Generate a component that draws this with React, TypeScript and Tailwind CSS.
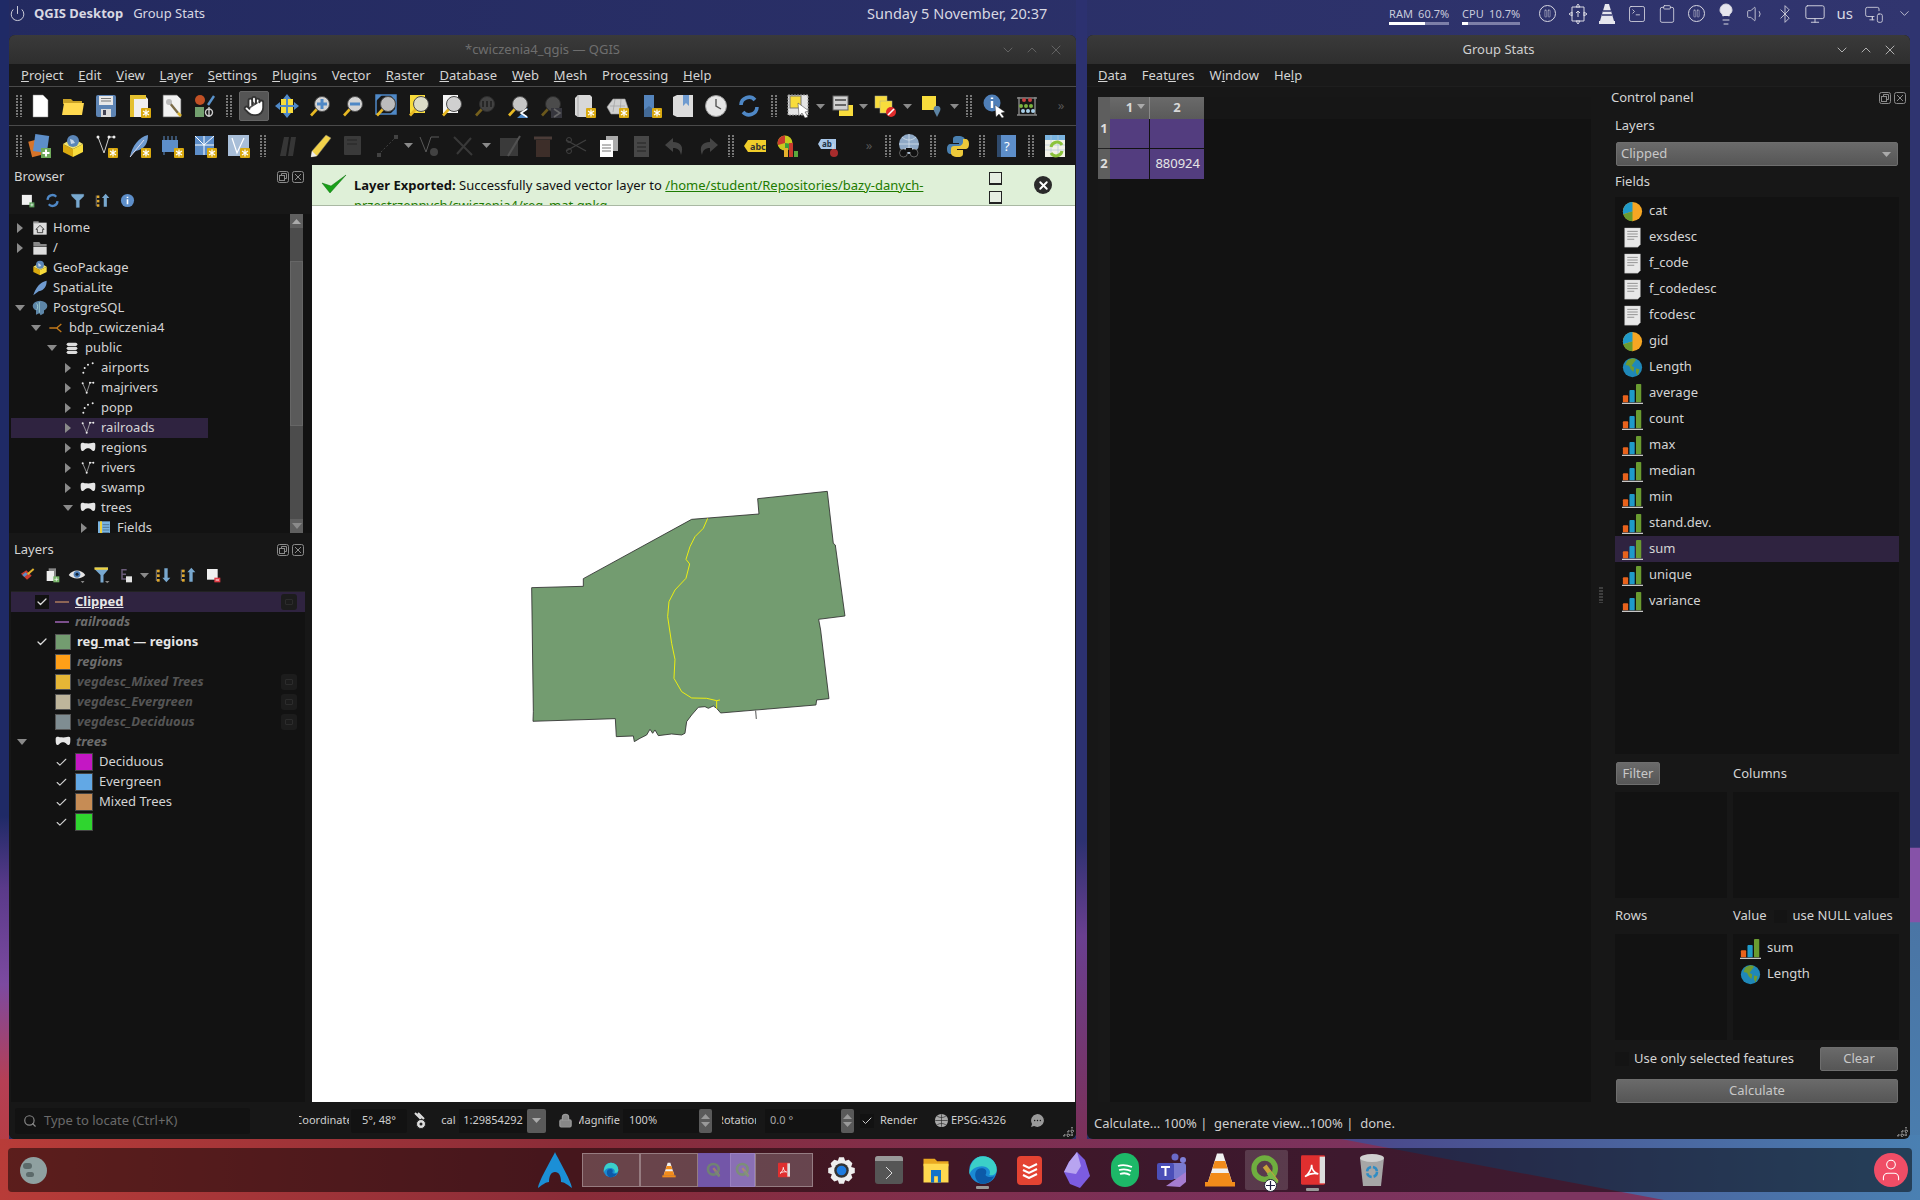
import { ReactNode } from 'react';
import { Power, Pause, Clipboard, Volume1, Bluetooth, Monitor, Lightbulb, ChevronDown, ChevronUp, X, Search, Lock, Check, SquareTerminal, Hand, MessageCircleMore, User, MonitorSmartphone } from 'lucide-react';

const Svg = ({ children, s = 24, vb = 24, cls = '' }: { children: ReactNode; s?: number; vb?: number; cls?: string }) => (
  <svg width={s} height={s} viewBox={`0 0 ${vb} ${vb}`} className={cls}>{children}</svg>
);

const Star = () => (
  <g>
    <rect x="14" y="14" width="10" height="10" rx="1" fill="#d9a90f" />
    <path d="M19 15.5v7M16 17l6 4M22 17l-6 4" stroke="#fff" strokeWidth="1.2" />
  </g>
);

const Mag = ({ c = '#c8c8c8', children }: { c?: string; children?: ReactNode }) => (
  <g>
    <path d="M9 15 3 21.5" stroke="#e8b923" strokeWidth="2.6" />
    <circle cx="14" cy="10" r="7.5" fill={c} stroke="#4c4c4c" />
    {children}
  </g>
);

const VecLine = () => (
  <g stroke="#cfcfcf" fill="none" strokeWidth="1">
    <path d="M4 5l6 14 5-15 5 0" />
    <g fill="#eee" stroke="none"><circle cx="4" cy="5" r="1.5" /><circle cx="10" cy="19" r="1.5" /><circle cx="15" cy="4" r="1.5" /><circle cx="20" cy="4" r="1.5" /></g>
  </g>
);
const VecPoint = () => (
  <g fill="#eee"><circle cx="5" cy="19" r="1.5" /><circle cx="7" cy="12" r="1.5" /><circle cx="12" cy="7" r="1.5" /><circle cx="19" cy="5" r="1.5" /></g>
);
const VecPoly = () => (
  <path d="M1 7c0-3 3-3 5-2.500s8 1 12 0 5-.5 5 3c0 5 0 9-3 9s-3-4-8-4-5 4-8 4-3-5-3-9.500z" fill="#e6e6e6" />
);

const icons: Record<string, ReactNode> = {
  new: <path d="M5 1h10l5 5v17H5z" fill="#fff" stroke="#888" strokeWidth=".5" />,
  open: <g><path d="M2 5h8l2 2h9v3H2z" fill="#c9a227" /><path d="M3 9h20l-2 12H1z" fill="#ffd94f" /></g>,
  save: <g><rect x="2" y="1" width="20" height="22" rx="2" fill="#5d84b4" /><rect x="5" y="2" width="14" height="9" fill="#e8e8e8" /><path d="M7 4.5h10M7 7h10" stroke="#777" /><rect x="7" y="15" width="10" height="8" fill="#dcdcdc" /><rect x="9" y="16" width="3" height="5" fill="#445" /></g>,
  layout: <g><path d="M3 1h14l4 4v18H3z" fill="#efefef" /><path d="M3 1h4v22H3z" fill="#e4c02f" /><path d="M3 1h16v4H3z" fill="#e4c02f" /><Star /></g>,
  report: <g><path d="M3 1h14l4 4v18H3z" fill="#f2f2f2" stroke="#555" strokeWidth=".7" /><path d="M9 8l9 11" stroke="#7a6a46" strokeWidth="2.4" /><circle cx="9" cy="8" r="3" fill="#bbb" /><path d="M18 19l3 3" stroke="#d8b22a" strokeWidth="2.6" /></g>,
  style: <g><circle cx="7" cy="6" r="5" fill="#c25125" /><path d="M15 11 21 2" stroke="#5a93cc" strokeWidth="2.4" /><rect x="2" y="13" width="9" height="10" fill="#73a06f" /><path d="M16 15a3 3 0 1 1 0 7 3 3 0 0 1 0-7zM16 13v10" stroke="#ccc" fill="none" strokeWidth="1.4" /></g>,
  panSel: <g><rect x="6" y="5" width="12" height="14" fill="#f8dc3c" /><path d="M12 0l4 5H8zM12 24l-4-5h8zM0 12l5-4v8zM24 12l-5 4V8z" fill="#4f88c6" /><path d="M12 5v14M5 12h14" stroke="#4f88c6" strokeWidth="2" /></g>,
  zoomIn: <Mag c="#d4d4d4"><path d="M14 5v10M9 10h10" stroke="#4f88c6" strokeWidth="3" /></Mag>,
  zoomOut: <Mag c="#d4d4d4"><path d="M9 10h10" stroke="#4f88c6" strokeWidth="3" /></Mag>,
  zoomFull: <g><path d="M2 1h6L2 7zM22 1h-6l6 6zM22 20h-6l6-6z" fill="#4f88c6" /><rect x="2" y="1" width="20" height="19" fill="none" stroke="#4f88c6" strokeWidth="1.5" /><Mag c="#bcbcbc" /></g>,
  zoomLayer: <g><rect x="3" y="1" width="15" height="18" fill="#f8dc3c" /><Mag c="#dcdcc8" /></g>,
  zoomSel: <g><path d="M3 1h15v18H3z" fill="#f4f4f4" /><Mag c="#d0d0d0" /></g>,
  zoom11: <g opacity=".45"><Mag c="#777"><path d="M10 7v6M14 7v6M18 7v6" stroke="#222" strokeWidth="1.4" /></Mag></g>,
  zoomLast: <g><Mag c="#c6c6c6" /><path d="M22 14v10H11zM22 15l-6 4 6 4" fill="#4f88c6" /><path d="M21 15l-6 4 6 4" fill="none" stroke="#fff" strokeWidth="1.6" /></g>,
  zoomNext: <g opacity=".4"><Mag c="#999" /><rect x="12" y="14" width="11" height="10" fill="#667" /><path d="M15 15l6 4-6 4" fill="none" stroke="#ddd" strokeWidth="1.6" /></g>,
  bookNew: <g><path d="M3 4 6 1h12l2 2v20H6l-3-2z" fill="#d8d8d8" /><path d="M6 1v22" stroke="#aaa" /><Star /></g>,
  mapNew: <g><path d="M2 13 8 5h12l3 9-7 6H6z" fill="#d0d0d0" stroke="#999" strokeWidth=".6" /><path d="M5 12h15M10 5 8 18M16 5l-1 14" stroke="#999" strokeWidth=".6" /><Star /></g>,
  bookmark: <g><path d="M6 1h10v15l-5-4-5 4z" fill="#6f9bd0" /><path d="M6 1h10v22H6z" fill="#4f7fb8" opacity=".8" /><Star /></g>,
  bookShow: <g><path d="M2 3 6 1h16v22H6l-4-2z" fill="#dcdcdc" /><path d="M12 1h6v11l-3-3-3 3z" fill="#6f9bd0" /></g>,
  clock: <g><circle cx="12" cy="12" r="10.5" fill="#e6e6e6" stroke="#999" /><path d="M12 5v7l5 3" fill="none" stroke="#555" strokeWidth="1.4" /></g>,
  refresh: <g fill="none" stroke="#4f88c6" strokeWidth="3.6"><path d="M4 11a8 8 0 0 1 14-5" /><path d="M20 13a8 8 0 0 1-14 5" /></g>,
  select: <g><rect x="1" y="1" width="20" height="20" fill="#e4e4e4" strokeDasharray="2 1" stroke="#999" /><rect x="3" y="2" width="11" height="12" fill="#f8dc3c" stroke="#777" /><path d="M11 9l1 13 3-3 3 5 3-1-3-5 4-1z" fill="#fff" stroke="#333" strokeWidth=".5" /></g>,
  selForm: <g><rect x="8" y="11" width="14" height="11" fill="#f8dc3c" /><rect x="2" y="2" width="15" height="14" fill="#d0d0d0" stroke="#666" /><path d="M4 6h11M4 11h11" stroke="#666" strokeWidth="2" /></g>,
  deselect: <g><rect x="2" y="2" width="12" height="12" fill="#f8dc3c" stroke="#aa9" strokeWidth=".5" /><rect x="7" y="7" width="12" height="12" fill="#f8dc3c" stroke="#aa9" strokeWidth=".5" /><circle cx="18" cy="18" r="5" fill="#e02b2b" /><path d="M15 21l6-6" stroke="#fff" strokeWidth="1.6" /></g>,
  selLoc: <g><rect x="3" y="2" width="14" height="14" fill="#f8dc3c" /><path d="M18 12c3 0 4 2 3 5l-3 6-3-6c-1-3 0-5 3-5z" fill="#5d84a4" /></g>,
  identify: <g><circle cx="10" cy="9" r="8.5" fill="#4f7fb8" /><path d="M10 7v7M10 3.5v1.5" stroke="#fff" strokeWidth="2.4" /><path d="M13 11l1 12 3-3 3 4 2-1-3-4 4-1z" fill="#fff" stroke="#333" strokeWidth=".4" /></g>,
  abacus: <g><path d="M2 4h20M2 21h20M4 3v18M20 3v18" stroke="#888" strokeWidth="1.4" /><g fill="#c84040"><circle cx="9" cy="6" r="2" /><circle cx="15" cy="6" r="2" /></g><g fill="#7cb23f"><circle cx="6" cy="12" r="2" /><circle cx="11" cy="12" r="2" /><circle cx="16" cy="12" r="2" /></g><g fill="#a9d0ea"><circle cx="8" cy="17" r="2" /><circle cx="13" cy="17" r="2" /><circle cx="18" cy="17" r="2" /></g></g>,
  dsm: <g><rect x="2" y="6" width="13" height="16" fill="#d6742a" transform="rotate(-14 8 14)" /><rect x="6" y="1" width="14" height="17" fill="#5d8ec9" transform="rotate(8 13 10)" /><rect x="13" y="14" width="10" height="10" fill="#6ea95a" /><path d="M18 15.5v7M14.5 19h7" stroke="#fff" strokeWidth="2" /></g>,
  gpkg: <g><path d="M2 10l10 5v8L2 18z" fill="#d9a90f" /><path d="M22 10l-10 5v8l10-5z" fill="#f8dc3c" /><path d="M2 10l10-6 10 6-10 5z" fill="#f4e46c" /><circle cx="12" cy="7" r="6" fill="#5b86b8" /><path d="M9 5l3 1 2 3-4 1z" fill="#c5d6e8" /></g>,
  newLine: <g><path d="M4 3l6 16 5-16h5" fill="none" stroke="#cfcfcf" /><g fill="#eee"><circle cx="4" cy="3" r="1.5" /><circle cx="15" cy="3" r="1.5" /><circle cx="20" cy="3" r="1.5" /></g><Star /></g>,
  feather: <g><path d="M3 23C5 12 12 3 21 1c0 8-3 14-12 16l-3 2z" fill="#6f9bd0" /><path d="M3 23 17 6" stroke="#dde" /><Star /></g>,
  feather2: <path d="M2 23C5 12 12 3 22 1c0 8-3 14-12 16l-3 2z" fill="#6f9bd0" />,
  wms: <g><rect x="2" y="6" width="16" height="12" fill="#5d8ec9" /><path d="M4 2v4M8 2v4M12 2v4M16 2v4M4 18v3" stroke="#5d8ec9" /><Star /></g>,
  grid: <g><rect x="2" y="2" width="19" height="19" fill="#5d8ec9" /><path d="M2 11h19M11 2v19M2 2l9 9M21 2l-10 9" stroke="#fff" strokeWidth="1" /><Star /></g>,
  vlayer: <g><rect x="2" y="1" width="21" height="21" fill="#a8bed8" /><path d="M6 4l5 15 7-15" fill="none" stroke="#fff" strokeWidth="1.2" /><Star /></g>,
  digit: <g opacity=".4"><path d="M4 22 8 3h5l-3 19zM12 22l3-19h5l-3 19z" fill="#666" /></g>,
  pencil: <g><path d="M17 1l5 3L8 22l-6 1 1-6z" fill="#f3d34a" stroke="#777" strokeWidth=".5" /><path d="M2 23l1-6 5 5z" fill="#eee" /></g>,
  dimSave: <g opacity=".45"><rect x="2" y="2" width="17" height="19" rx="1" fill="#666" /><path d="M5 6h10M5 10h10" stroke="#333" /></g>,
  dimLine: <g opacity=".45"><path d="M3 21 21 3" stroke="#777" strokeDasharray="2 2" /><rect x="2" y="19" width="4" height="4" fill="#777" /><rect x="19" y="1" width="4" height="4" fill="#777" /></g>,
  dimNode: <g opacity=".45"><path d="M2 3l6 15 5-15h8" fill="none" stroke="#aaa" /><circle cx="16" cy="18" r="4" fill="#777" /></g>,
  dimTool: <g opacity=".35"><path d="M3 3l18 18M20 4 6 20" stroke="#777" strokeWidth="2" /></g>,
  dimEdit: <g opacity=".45"><rect x="2" y="4" width="18" height="18" fill="#666" /><path d="M10 22 22 2" stroke="#999" strokeWidth="2" /></g>,
  dimTrash: <g opacity=".45"><rect x="5" y="6" width="14" height="17" fill="#6b4a40" /><path d="M3 4h18" stroke="#8b6a60" strokeWidth="3" /></g>,
  scissors: <g opacity=".35"><path d="M2 6l20 11M2 17 22 6" stroke="#888" strokeWidth="1.4" /><circle cx="5" cy="17" r="2.5" fill="none" stroke="#888" /><circle cx="5" cy="6" r="2.5" fill="none" stroke="#888" /></g>,
  copy: <g><rect x="9" y="2" width="12" height="15" fill="#aaa" /><rect x="3" y="6" width="13" height="17" fill="#fff" /><path d="M5 11h9M5 14h9M5 17h9" stroke="#777" /></g>,
  paste: <g opacity=".5"><rect x="4" y="2" width="15" height="21" fill="#777" /><path d="M7 9h9M7 13h9M7 17h9" stroke="#333" /></g>,
  undo: <path d="M10 4 2 11l8 7v-4c5 0 7 2 8 7 3-8 0-13-8-13z" fill="#444" />,
  redo: <path d="M14 4l8 7-8 7v-4c-5 0-7 2-8 7-3-8 0-13 8-13z" fill="#444" />,
  abc: <g><path d="M1 12l4-6h18v12H5z" fill="#f0cd2a" /><text x="7" y="16" fontSize="9" fontWeight="700" fill="#333" fontFamily="Noto Sans">abc</text></g>,
  diagram: <g><circle cx="9" cy="9" r="7.5" fill="#c8c820" /><path d="M9 9V1.5A7.5 7.5 0 0 0 2 11z" fill="#c93a2e" /><path d="M9 9l7 1a7.5 7.5 0 0 1-7 6.500z" fill="#3b9d3b" /><rect x="8" y="14" width="4" height="9" fill="#e4b12c" /><rect x="13" y="9" width="4" height="14" fill="#c93a2e" /><rect x="18" y="17" width="4" height="6" fill="#5aa83c" /></g>,
  label: <g><path d="M1 10l3-5h15v10H4z" fill="#a7c6e8" /><text x="5" y="13" fontSize="8" fontWeight="700" fill="#234" fontFamily="Noto Sans">ab</text><path d="M16 10v6" stroke="#ddd" /><circle cx="17" cy="19" r="4" fill="#a82c2c" /></g>,
  globeBin: <g><circle cx="12" cy="10" r="10" fill="#8fa9c6" /><path d="M2 10h20M12 0v20M5 3c4 4 10 4 14 0M5 17c4-4 10-4 14 0" stroke="#dde6ef" fill="none" strokeWidth=".7" /><circle cx="6.500" cy="19" r="4" fill="#111" stroke="#aaa" strokeWidth=".5" /><circle cx="17" cy="19" r="4" fill="#111" stroke="#aaa" strokeWidth=".5" /><rect x="9" y="14" width="6" height="4" fill="#111" /></g>,
  python: <g><path d="M12 2c-5 0-5 2-5 4v3h6v1H5c-3 0-4 2-4 5s1 5 4 5h2v-3c0-2 2-4 4-4h5c2 0 3-1 3-3V6c0-2-2-4-7-4z" fill="#4a80b0" /><path d="M12 23c5 0 5-2 5-4v-3h-6v-1h8c3 0 4-2 4-5s-1-5-4-5h-2v3c0 2-2 4-4 4H8c-2 0-3 1-3 3v4c0 2 2 4 7 4z" fill="#ecc93a" /></g>,
  help: <g><rect x="4" y="1" width="17" height="22" fill="#5d8ec9" /><rect x="2" y="1" width="4" height="22" fill="#2f4a6c" /><text x="9" y="17" fontSize="13" fill="#fff" fontFamily="Noto Sans">?</text></g>,
  table: <g><rect x="2" y="1" width="20" height="22" fill="#f2f2e8" /><rect x="2" y="1" width="20" height="5" fill="#7ab4e0" /><path d="M2 11h20M2 16h20M8 1v22M15 1v22" stroke="#b4c8d8" strokeWidth=".7" /><path d="M8 13a6 6 0 0 1 11-2M19 17a6 6 0 0 1-11 2" fill="none" stroke="#8bc33c" strokeWidth="3" /></g>,
  addLayer: <g><rect x="3" y="3" width="16" height="16" fill="#f0f0f0" /><rect x="15" y="15" width="8" height="8" fill="#5b9e5b" /><path d="M19 16.500v5M16.500 19h5" stroke="#fff" /></g>,
  filter: <path d="M2 2h20v3l-7 7v11h-5V12L3 5z" fill="#78a8cf" stroke="#78a8cf" strokeWidth=".5" />,
  collapse: <g><path d="M2 4v17" stroke="#aaa" /><g fill="#e0a92e"><rect x="3" y="4" width="4" height="4" /><rect x="3" y="11" width="4" height="4" /><rect x="3" y="18" width="4" height="4" /></g><path d="M17 1l6 7h-4v14h-5V8h-3z" fill="#78a8cf" /></g>,
  expand: <g><path d="M2 4v17" stroke="#aaa" /><g fill="#e0a92e"><rect x="3" y="4" width="4" height="4" /><rect x="3" y="11" width="4" height="4" /><rect x="3" y="18" width="4" height="4" /></g><path d="M17 23l6-7h-4V2h-5v14h-3z" fill="#78a8cf" /></g>,
  info: <g><circle cx="12" cy="12" r="10.500" fill="#5d8ec9" /><path d="M12 10v8M12 6v2" stroke="#fff" strokeWidth="2.6" /></g>,
  paint: <g><path d="M3 10l8-5 8 8-7 6z" fill="#c93a2e" /><path d="M5 12l5-4 3 3-5 4z" fill="#5d8ec9" /><path d="M13 11 22 3" stroke="#e0b12e" strokeWidth="3" /></g>,
  addGroup: <g><rect x="7" y="2" width="11" height="15" fill="#888" /><rect x="4" y="6" width="11" height="15" fill="#eee" /><rect x="14" y="14" width="9" height="9" fill="#78b56a" /><path d="M18.500 15.500v6M15.500 18.500h6" stroke="#fff" /></g>,
  eye: <g><path d="M1 12c5-8 17-8 22 0-5 6-17 6-22 0z" fill="#e4e4e4" /><circle cx="12" cy="11" r="4.500" fill="#4f7fb8" /><circle cx="12" cy="11" r="2" fill="#123" /><path d="M17 20h5l-2.500 3z" fill="#888" /></g>,
  filterDd: <g><path d="M2 2h18v3l-6 7v10h-4V12L3 5z" fill="#78a8cf" /><path d="M2 2h18v3H2z" fill="#f0d13a" /><path d="M16 20h6l-3 3z" fill="#888" /></g>,
  epsilon: <g><path d="M13 4H6v7h6M6 11v7h7" fill="none" stroke="#6b5c7a" strokeWidth="2.2" /><rect x="12" y="14" width="9" height="9" fill="#e4e4e4" /></g>,
  removeLayer: <g><rect x="3" y="3" width="16" height="16" fill="#f0f0f0" /><rect x="14" y="16" width="9" height="7" fill="#e03c46" /><path d="M16 19.500h5" stroke="#fff" strokeWidth="1.4" /></g>,
  home: <g><rect x="2" y="4" width="20" height="18" fill="#ddd" /><path d="M12 8l6 6h-2v5H8v-5H6z" fill="none" stroke="#222" strokeWidth="1.2" /><rect x="2" y="2" width="8" height="3" fill="#999" /></g>,
  root: <g><path d="M2 3h9l2 3h9v3H2z" fill="#888" /><rect x="2" y="10" width="20" height="12" fill="#ddd" /></g>,
  pg: <g><ellipse cx="12" cy="9" rx="11" ry="8" fill="#5d86a8" /><path d="M6 12v10l5-2 2 3 5-3v-8z" fill="#5d86a8" /><path d="M11 3v16M7 5c2 3 2 7 0 10" stroke="#cfe" fill="none" strokeWidth=".8" /></g>,
  conn: <g><path d="M2 12h13M20 6l-7 6 7 6" fill="none" stroke="#c47a1a" strokeWidth="2" /></g>,
  db: <g fill="#ddd"><rect x="4" y="4" width="16" height="5" rx="2.500" /><rect x="4" y="10" width="16" height="5" rx="2.500" /><rect x="4" y="16" width="16" height="5" rx="2.500" /></g>,
  line: <VecLine />, point: <VecPoint />, poly: <VecPoly />,
  fields: <g><rect x="3" y="2" width="18" height="20" fill="#7ab4e0" /><rect x="6" y="2" width="3" height="20" fill="#f0d13a" /><path d="M10 7h10M10 11h10M10 15h10M10 19h10" stroke="#234" strokeWidth=".7" /></g>,
  pie: <g><circle cx="12" cy="12" r="11" fill="#f5a623" /><path d="M12 12V1A11 11 0 0 0 1.500 15z" fill="#1f9ac9" /><path d="M12 12 1.500 15A11 11 0 0 0 12 23z" fill="#6a9b30" /></g>,
  doc: <g><path d="M3 1h18v19l-3 3H3z" fill="#e8e8e8" stroke="#aaa" strokeWidth=".4" /><path d="M6 5h12M6 8h12M6 11h12M6 14h8" stroke="#888" /></g>,
  earth: <g><circle cx="12" cy="12" r="11" fill="#1f88b8" /><path d="M6 4c4-3 9-3 10-1l-3 4-2 3 3 2-1 5-3-3-2-4-4-1z" fill="#6f9b30" /><path d="M16 13l4 1-2 7-2-3z" fill="#6f9b30" /></g>,
  chart: <g><rect x="1" y="14" width="6" height="8" rx="1" fill="#e8621c" /><rect x="8.500" y="8" width="6" height="14" rx="1" fill="#1f9ac9" /><rect x="16" y="1" width="6" height="21" rx="1" fill="#6a9b30" /><path d="M0 23.200h24" stroke="#eee" strokeWidth="1.200" /></g>,
};

const Ic = ({ n, s = 24 }: { n: string; s?: number }) => <Svg s={s}>{icons[n]}</Svg>;

const Slot = ({ n, s = 24, cls = 'w-[33px]' }: { n: string; s?: number; cls?: string }) => (
  <div className={`${cls} h-full flex items-center justify-center shrink-0`}><Ic n={n} s={s} /></div>
);

const Grip = ({ cls }: { cls: string }) => (
  <div className={`${cls} h-full flex items-center justify-center shrink-0`}>
    <svg width="6" height="22"><path d="M1 0v22M5 0v22" stroke="#777" strokeWidth="2" strokeDasharray="2 1" /></svg>
  </div>
);

const Dd = ({ cls }: { cls: string }) => (
  <div className={`${cls} h-full flex items-center justify-center shrink-0`}>
    <svg width="9" height="5"><path d="M0 0h9L4.500 5z" fill="#8a8a8a" /></svg>
  </div>
);

const More = ({ cls }: { cls: string }) => (
  <div className={`${cls} h-full flex items-center justify-center shrink-0 text-[#555] text-[13px]`}>»</div>
);

const TriR = () => <svg width="6" height="10"><path d="M0 0l6 5-6 5z" fill="#8a8a8a" /></svg>;
const TriD = () => <svg width="10" height="6"><path d="M0 0h10L5 6z" fill="#8a8a8a" /></svg>;

const Dock = () => (
  <div className="flex gap-[3px] items-center text-[#8a8a8a]">
    <svg width="12" height="12" viewBox="0 0 12 12" fill="none" stroke="currentColor"><rect x=".5" y=".5" width="11" height="11" rx="2" /><rect x="2.500" y="4.500" width="5" height="5" /><path d="M4.500 4.500v-2h5v5h-2" /></svg>
    <svg width="12" height="12" viewBox="0 0 12 12" fill="none" stroke="currentColor"><rect x=".5" y=".5" width="11" height="11" rx="2" /><path d="M3 3l6 6M9 3l-6 6" /></svg>
  </div>
);

const Menu = ({ items, cls }: { items: [string, string, string][]; cls: string }) => (
  <div className={`h-[23px] pt-[1px] bg-[#191919] flex items-center text-[13px] text-[#d4d4d4] shrink-0 ${cls}`}>
    {items.map(([a, b, c]) => (
      <span key={a + b + c} className="whitespace-nowrap">{a}<u>{b}</u>{c}</span>
    ))}
  </div>
);

const Bars = ({ title, color, cls }: { title: string; color: string; cls: string }) => (
  <div className={`h-[29px] flex items-center justify-center relative shrink-0 bg-linear-to-b from-[#3a3a3a] to-[#2e2e2e] rounded-t-[6px] ${cls}`}>
    <span className={`text-[13px] ${color}`}>{title}</span>
    <div className={`absolute right-[12px] top-[7px] flex gap-[8px] ${color}`}>
      <ChevronDown size={16} strokeWidth={1.2} />
      <ChevronUp size={16} strokeWidth={1.2} />
      <X size={16} strokeWidth={1.2} />
    </div>
  </div>
);

const treeRows: [number, string, string, string][] = [
  [0, 'r', 'home', 'Home'],
  [0, 'r', 'root', '/'],
  [0, '', 'gpkg', 'GeoPackage'],
  [0, '', 'feather2', 'SpatiaLite'],
  [0, 'd', 'pg', 'PostgreSQL'],
  [1, 'd', 'conn', 'bdp_cwiczenia4'],
  [2, 'd', 'db', 'public'],
  [3, 'r', 'point', 'airports'],
  [3, 'r', 'line', 'majrivers'],
  [3, 'r', 'point', 'popp'],
  [3, 'r', 'line', 'railroads'],
  [3, 'r', 'poly', 'regions'],
  [3, 'r', 'line', 'rivers'],
  [3, 'r', 'poly', 'swamp'],
  [3, 'd', 'poly', 'trees'],
  [4, 'r', 'fields', 'Fields'],
];

const lvl = ['pl-[2px]', 'pl-[18px]', 'pl-[34px]', 'pl-[50px]', 'pl-[66px]'];

const Tree = () => (
  <div className="h-[368px] flex flex-col shrink-0">
    <div className="h-[23px] pl-[5px] pr-[8px] flex items-center justify-between text-[13px] text-[#d4d4d4] shrink-0"><span>Browser</span><Dock /></div>
    <div className="h-[24px] pl-[6px] flex items-center shrink-0">
      {['addLayer', 'refresh', 'filter', 'collapse', 'info'].map((n) => <Slot key={n} n={n} s={15} cls="w-[25px]" />)}
    </div>
    <div className="flex-1 min-h-0 flex bg-[#121212] overflow-hidden pt-[4px] pl-[2px] mt-[2px]">
      <div className="w-[279px] overflow-hidden">
        {treeRows.map(([l, a, n, t]) => (
          <div key={t} className={`h-[20px] w-[197px] flex items-center text-[13px] text-[#d4d4d4] whitespace-nowrap ${lvl[l]} ${t === 'railroads' ? 'bg-[#2f2340]' : ''}`}>
            <div className="w-[14px] flex justify-center">{a === 'r' && <TriR />}{a === 'd' && <TriD />}</div>
            <div className="w-[26px] flex justify-center"><Ic n={n} s={16} /></div>
            <span>{t}</span>
          </div>
        ))}
      </div>
      <div className="w-[13px] -mt-[4px] flex flex-col bg-[#505050] shrink-0">
        <div className="h-[14px] flex items-center justify-center bg-[#5f5f5f]"><svg width="9" height="5"><path d="M0 5h9L4.500 0z" fill="#aaa" /></svg></div>
        <div className="h-[33px] bg-[#4c4c4c]" />
        <div className="h-[165px] bg-[#5a5a5a] border border-[#666]" />
        <div className="flex-1 bg-[#4c4c4c]" />
        <div className="h-[14px] flex items-center justify-center bg-[#5f5f5f]"><TriD /></div>
      </div>
    </div>
  </div>
);

const Indicator = () => (
  <div className="absolute right-[8px] top-[2px] w-[16px] h-[16px] rounded-[3px] bg-[#1c1c1c] flex items-center justify-center">
    <div className="w-[8px] h-[6px] border border-[#2c2c2c] rounded-[1px]" />
  </div>
);

const SubLayer = ({ c, name, ind, style }: { c: string; name: string; ind?: boolean; style: string }) => (
  <div className="h-[20px] relative flex items-center whitespace-nowrap">
    <div className="w-[44px]" />
    <div className={`w-[16px] h-[16px] border border-[#555] ${c}`} />
    <span className={`ml-[6px] text-[13px] ${style}`}>{name}</span>
    {ind && <Indicator />}
  </div>
);

const Sym = ({ c, name }: { c: string; name: string }) => (
  <div className="h-[20px] flex items-center whitespace-nowrap">
    <div className="w-[41px]" />
    <div className="w-[18px] flex justify-center"><Check size={13} strokeWidth={2} className="text-[#cfcfcf]" /></div>
    <div className="w-[5px]" />
    <div className={`w-[18px] h-[18px] border border-[#444] ${c}`} />
    <span className="ml-[6px] text-[13px] text-[#d4d4d4]">{name}</span>
  </div>
);

const Layers = () => (
  <div className="flex-1 min-h-0 flex flex-col mt-[5px]">
    <div className="h-[24px] pl-[5px] pr-[8px] flex items-center justify-between text-[13px] text-[#d4d4d4] shrink-0"><span>Layers</span><Dock /></div>
    <div className="h-[26px] pl-[5px] flex items-center shrink-0">
      <Slot n="paint" s={16} cls="w-[25px]" />
      <Slot n="addGroup" s={16} cls="w-[25px]" />
      <Slot n="eye" s={18} cls="w-[25px]" />
      <Slot n="filterDd" s={18} cls="w-[25px]" />
      <Slot n="epsilon" s={16} cls="w-[24px]" />
      <Dd cls="w-[12px]" />
      <Slot n="expand" s={16} cls="w-[25px]" />
      <Slot n="collapse" s={16} cls="w-[25px]" />
      <Slot n="removeLayer" s={16} cls="w-[25px]" />
    </div>
    <div className="flex-1 min-h-0 ml-[2px] mr-[7px] mt-[3px] bg-[#121212] border-t border-[#222]">
      <div className="h-[20px] bg-[#2f2340] relative flex items-center">
        <div className="w-[24px]" />
        <div className="w-[14px] h-[14px] bg-[#111] flex items-center justify-center"><Check size={12} strokeWidth={2.500} className="text-[#ddd]" /></div>
        <svg width="14" height="2" className="ml-[6px]"><rect width="14" height="2" fill="#8c6455" /></svg>
        <span className="ml-[6px] text-[13px] font-bold text-[#e6e6e6] underline">Clipped</span>
        <Indicator />
      </div>
      <div className="h-[20px] flex items-center">
        <div className="w-[44px]" />
        <svg width="14" height="2"><rect width="14" height="2" fill="#7b4f8c" /></svg>
        <span className="ml-[6px] text-[13px] font-bold italic text-[#6d6d6d]">railroads</span>
      </div>
      <div className="h-[20px] relative flex items-center whitespace-nowrap">
        <div className="w-[24px]" />
        <div className="w-[14px] flex justify-center"><Check size={12} strokeWidth={2.500} className="text-[#ddd]" /></div>
        <div className="w-[6px]" />
        <div className="w-[16px] h-[16px] border border-[#555] bg-[#739c70]" />
        <span className="ml-[6px] text-[13px] font-bold text-[#e6e6e6]">reg_mat — regions</span>
      </div>
      <SubLayer c="bg-[#ff9f17]" name="regions" style="font-bold italic text-[#6d6d6d]" />
      <SubLayer c="bg-[#e5b636]" name="vegdesc_Mixed Trees" ind style="font-bold italic text-[#555]" />
      <SubLayer c="bg-[#beb59b]" name="vegdesc_Evergreen" ind style="font-bold italic text-[#555]" />
      <SubLayer c="bg-[#7f8d92]" name="vegdesc_Deciduous" ind style="font-bold italic text-[#555]" />
      <div className="h-[20px] flex items-center">
        <div className="w-[6px]" />
        <TriD />
        <div className="w-[28px]" />
        <Ic n="poly" s={16} />
        <span className="ml-[5px] text-[13px] font-bold italic text-[#6d6d6d]">trees</span>
      </div>
      <Sym c="bg-[#c417c4]" name="Deciduous" />
      <Sym c="bg-[#62a8e5]" name="Evergreen" />
      <Sym c="bg-[#c68c55]" name="Mixed Trees" />
      <Sym c="bg-[#2fd52f]" name="" />
    </div>
  </div>
);

const Spin = () => (
  <div className="w-[13px] h-[24px] bg-[#5a5a5a] rounded-[2px] flex flex-col items-center justify-center gap-[3px] shrink-0">
    <svg width="9" height="5"><path d="M0 5h9L4.500 0z" fill="#999" /></svg>
    <svg width="9" height="5"><path d="M0 0h9L4.500 5z" fill="#999" /></svg>
  </div>
);

const Clip = ({ t, cls }: { t: string; cls: string }) => (
  <div className={`${cls} overflow-hidden flex justify-center whitespace-nowrap shrink-0`}><span>{t}</span></div>
);

const StatusBar = () => (
  <div className="h-[37px] bg-[#171717] flex items-center text-[11px] text-[#cfcfcf] shrink-0 rounded-b-[6px]">
    <div className="ml-[6px] w-[235px] h-[26px] bg-[#121212] rounded-[3px] flex items-center pl-[8px] gap-[7px] text-[13px] text-[#6a6a6a]">
      <Search size={14} className="text-[#888]" /><span>Type to locate (Ctrl+K)</span>
    </div>
    <Clip t="Coordinate" cls="ml-[49px] w-[50px]" />
    <div className="ml-[2px] w-[56px] h-[24px] bg-[#121212] rounded-[2px] flex items-center justify-center">5°, 48°</div>
    <div className="w-[26px] flex justify-center"><svg width="16" height="18" viewBox="0 0 16 18"><path d="M3 1l6 6M6 1l6 6" stroke="#ddd" strokeWidth="2" /><circle cx="9" cy="12" r="4.500" fill="#ddd" stroke="#222" /><circle cx="9" cy="12" r="1.500" fill="#222" /></svg></div>
    <Clip t="Scale" cls="ml-[8px] w-[15px]" />
    <div className="ml-[3px] w-[68px] h-[24px] bg-[#121212] flex items-center justify-center">1:29854292</div>
    <div className="w-[19px] h-[24px] bg-[#5a5a5a] rounded-[2px] flex items-center justify-center"><svg width="9" height="5"><path d="M0 0h9L4.500 5z" fill="#aaa" /></svg></div>
    <div className="ml-[9px] w-[20px] flex justify-center"><Lock size={15} className="text-[#999]" fill="#888" /></div>
    <Clip t="Magnifier" cls="ml-[4px] w-[41px]" />
    <div className="ml-[3px] w-[76px] h-[24px] bg-[#121212] flex items-center pl-[6px]">100%</div>
    <Spin />
    <Clip t="Rotation" cls="ml-[10px] w-[34px]" />
    <div className="ml-[9px] w-[76px] h-[24px] bg-[#121212] flex items-center pl-[5px] text-[#a9a9a9]">0.0 °</div>
    <Spin />
    <div className="ml-[6px] w-[14px] h-[14px] bg-[#121212] flex items-center justify-center"><Check size={12} strokeWidth={2} className="text-[#ccc]" /></div>
    <span className="ml-[6px] w-[50px]">Render</span>
    <div className="ml-[1px] w-[20px] flex justify-center"><Svg s={15}><circle cx="12" cy="12" r="10.500" fill="#aaa" /><path d="M2 12h20M12 2v20M5 5c4 3 10 3 14 0M5 19c4-3 10-3 14 0" stroke="#222" fill="none" strokeWidth="1" /></Svg></div>
    <span className="w-[64px]">EPSG:4326</span>
    <div className="ml-[12px] w-[20px] flex justify-center"><MessageCircleMore size={17} className="text-[#171717]" fill="#9a9a9a" /></div>
    <div className="ml-auto mr-[2px] self-end mb-[2px]"><svg width="11" height="11"><path d="M9 1v10M5 5v6M1 9v2M1 9h10M5 5h6" stroke="#777" strokeWidth="2" strokeDasharray="1.500 1" /></svg></div>
  </div>
);

const MapCanvas = () => (
  <div className="flex-1 min-h-0 min-w-0 flex flex-col bg-white overflow-hidden">
    <div className="h-[41px] bg-[#dff0d8] border-b border-[#a9b8a3] flex shrink-0 text-[13px] text-[#111] relative">
      <div className="w-[44px] flex justify-center pt-[9px]">
        <svg width="26" height="20" viewBox="0 0 26 20"><path d="M1 9l8 10L25 1 10 12z" fill="#18a018" stroke="#0c6e0c" strokeWidth=".5" /></svg>
      </div>
      <div className="w-[580px] leading-[20px] pt-[10px] ml-[-2px] overflow-hidden">
        <b>Layer Exported:</b> Successfully saved vector layer to{' '}
        <span className="text-[#1d7b00] underline">/home/student/Repositories/bazy-danych-przestrzennych/cwiczenia4/reg_mat.gpkg</span>
      </div>
      <div className="absolute left-[677px] top-[7px] flex flex-col gap-[6px]">
        <div className="w-[13px] h-[13px] border border-[#222] border-b-2 bg-[#e6eee2]" />
        <div className="w-[13px] h-[13px] border border-[#222] border-b-2 bg-[#e6eee2]" />
      </div>
      <div className="absolute left-[722px] top-[11px] w-[18px] h-[18px] rounded-full bg-[#2a2a2a] flex items-center justify-center"><X size={13} strokeWidth={3.500} className="text-white" /></div>
    </div>
    <svg viewBox="312 206 763 896" className="flex-1 min-h-0 w-full">
      <g transform="translate(500 470) scale(0.3333)">
        <path d="M767 722l2 25" stroke="#333" strokeWidth="2.500" />
        <polygon points="95,353 250,349 250,326 575,148 777,132 773,86 982,64 1000,220 1006,225 1035,438 956,448 962,480 987,686 950,690 948,705 662,729 650,715 640,708 625,715 615,710 595,712 575,735 560,755 555,790 545,795 515,792 475,797 465,780 458,790 450,778 440,795 420,805 403,815 400,798 349,800 346,746 99,754 100,725" fill="#739c70" stroke="#2c2c2c" strokeWidth="2.500" />
        <polyline points="623,145 610,175 585,200 570,230 558,268 569,282 558,325 525,360 507,395 503,440 515,520 525,568 522,625 545,665 575,684 620,685 650,692 660,690" fill="none" stroke="#f4f40a" strokeWidth="2.800" />
        <path d="M650 692v24" stroke="#f4f40a" strokeWidth="2.800" />
      </g>
    </svg>
  </div>
);

const Qgis = () => (
  <div className="w-[1067px] h-[1104px] flex flex-col bg-[#171717] rounded-[6px] shrink-0">
    <Bars title="*cwiczenia4_qgis — QGIS" color="text-[#6e6e6e]" cls="" />
    <Menu cls="pl-[12px] gap-[14.800px] border-b border-[#4a4a4a]" items={[['', 'P', 'roject'], ['', 'E', 'dit'], ['', 'V', 'iew'], ['', 'L', 'ayer'], ['', 'S', 'ettings'], ['', 'P', 'lugins'], ['Vec', 't', 'or'], ['', 'R', 'aster'], ['', 'D', 'atabase'], ['', 'W', 'eb'], ['', 'M', 'esh'], ['Pro', 'c', 'essing'], ['', 'H', 'elp']]} />
    <div className="h-[39px] pl-[7px] flex items-center border-b border-[#4a4a4a] shrink-0">
      <Grip cls="w-[6px]" />
      <div className="w-[1px]" />
      {['new', 'open', 'save', 'layout', 'report', 'style'].map((n) => <Slot key={n} n={n} />)}
      <Grip cls="w-[16px]" />
      <div className="w-[33px] h-full flex items-center justify-center shrink-0">
        <div className="w-[30px] h-[30px] bg-[#555] border border-[#666] rounded-[2px] flex items-center justify-center"><Hand size={22} fill="#fff" className="text-[#333]" /></div>
      </div>
      {['panSel', 'zoomIn', 'zoomOut', 'zoomFull', 'zoomLayer', 'zoomSel', 'zoom11', 'zoomLast', 'zoomNext', 'bookNew', 'mapNew', 'bookmark', 'bookShow', 'clock', 'refresh'].map((n) => <Slot key={n} n={n} />)}
      <Grip cls="w-[17px]" />
      <Slot n="select" />
      <Dd cls="w-[11px]" />
      <Slot n="selForm" />
      <Dd cls="w-[9px]" />
      <Slot n="deselect" />
      <Dd cls="w-[13px]" />
      <Slot n="selLoc" />
      <Dd cls="w-[14px]" />
      <Grip cls="w-[16px]" />
      <Slot n="identify" />
      <Slot n="abacus" />
      <More cls="w-[30px] ml-auto" />
    </div>
    <div className="h-[39px] pl-[7px] flex items-center shrink-0">
      <Grip cls="w-[6px]" />
      <div className="w-[1px]" />
      {['dsm', 'gpkg', 'newLine', 'feather', 'wms', 'grid', 'vlayer'].map((n) => <Slot key={n} n={n} />)}
      <Grip cls="w-[17px]" />
      {['digit', 'pencil', 'dimSave', 'dimLine'].map((n) => <Slot key={n} n={n} />)}
      <Dd cls="w-[10px]" />
      {['dimNode', 'dimTool'].map((n) => <Slot key={n} n={n} />)}
      <Dd cls="w-[14px]" />
      {['dimEdit', 'dimTrash', 'scissors', 'copy', 'paste', 'undo', 'redo'].map((n) => <Slot key={n} n={n} />)}
      <Grip cls="w-[14px]" />
      <Slot n="abc" />
      <Slot n="diagram" />
      <Slot n="label" cls="w-[50px]" />
      <More cls="w-[30px]" />
      <Grip cls="w-[8px]" />
      <Slot n="globeBin" />
      <Grip cls="w-[16px]" />
      <Slot n="python" />
      <Grip cls="w-[16px]" />
      <Slot n="help" />
      <Grip cls="w-[15px]" />
      <Slot n="table" />
    </div>
    <div className="flex-1 min-h-0 flex">
      <div className="w-[303px] flex flex-col shrink-0">
        <Tree />
        <Layers />
      </div>
      <MapCanvas />
      <div className="w-[1px]" />
    </div>
    <StatusBar />
  </div>
);

const fields: [string, string, boolean?][] = [
  ['pie', 'cat'], ['doc', 'exsdesc'], ['doc', 'f_code'], ['doc', 'f_codedesc'], ['doc', 'fcodesc'], ['pie', 'gid'], ['earth', 'Length'],
  ['chart', 'average'], ['chart', 'count'], ['chart', 'max'], ['chart', 'median'], ['chart', 'min'], ['chart', 'stand.dev.'], ['chart', 'sum', true], ['chart', 'unique'], ['chart', 'variance'],
];

const FieldRow = ({ n, t, sel }: { n: string; t: string; sel?: boolean }) => (
  <div className={`h-[26px] flex items-center text-[13px] text-[#d4d4d4] ${sel ? 'bg-[#2f2340]' : ''}`}>
    <div className="w-[34px] flex justify-center pl-[1px]"><Ic n={n} s={21} /></div>
    <span>{t}</span>
  </div>
);

const Btn = ({ t, cls }: { t: string; cls: string }) => (
  <div className={`bg-linear-to-b from-[#6a6a6a] to-[#565656] border border-[#6e6e6e] rounded-[2px] flex items-center justify-center text-[13px] text-[#c8c8c8] shrink-0 ${cls}`}>{t}</div>
);

const GroupStats = () => (
  <div className="w-[823px] h-[1104px] flex flex-col bg-[#171717] rounded-[6px] shrink-0">
    <Bars title="Group Stats" color="text-[#cfcfcf]" cls="" />
    <Menu cls="pl-[11px] gap-[15px] border-b border-[#1e1e1e]" items={[['', 'D', 'ata'], ['Feat', 'u', 'res'], ['W', 'i', 'ndow'], ['He', 'l', 'p']]} />
    <div className="flex-1 min-h-0 flex">
      <div className="w-[493px] ml-[11px] mt-[10px] mb-[1px] bg-[#121212] flex flex-col shrink-0">
        <div className="h-[22px] flex bg-[#161616]">
          <div className="w-[12px] bg-[#5e5e5e]" />
          <div className="w-[40px] bg-linear-to-b from-[#6a6a6a] to-[#5a5a5a] flex items-center justify-center relative text-[13px] font-bold text-[#d8d8d8] border-r border-[#888]">1<div className="absolute right-[4px] top-[7px]"><svg width="8" height="5"><path d="M0 0h8L4 5z" fill="#aaa" /></svg></div></div>
          <div className="w-[54px] bg-linear-to-b from-[#6a6a6a] to-[#5a5a5a] flex items-center justify-center text-[13px] font-bold text-[#d8d8d8]">2</div>
        </div>
        <div className="flex-1 min-h-0 flex">
          <div className="w-[12px] bg-[#181818] flex flex-col shrink-0">
            <div className="h-[30px] bg-[#5e5e5e] flex justify-center text-[13px] font-bold text-[#ddd] border-b border-[#222]">1</div>
            <div className="h-[30px] bg-[#5e5e5e] flex items-center justify-center text-[13px] font-bold text-[#ddd]">2</div>
          </div>
          <div className="w-[94px] grid grid-cols-[40px_54px] grid-rows-[30px_30px] h-[60px]">
            <div className="bg-[#533d7f] border border-[#121212] border-t-0 border-l-0" />
            <div className="bg-[#533d7f] border-b border-[#121212]" />
            <div className="bg-[#533d7f] border-r border-[#121212]" />
            <div className="bg-[#533d7f] flex items-center justify-end pr-[4px] text-[13px] text-[#e6e6e6]">880924</div>
          </div>
        </div>
      </div>
      <div className="w-[20px] flex items-center justify-center shrink-0"><svg width="4" height="16"><path d="M1 0v16M3 0v16" stroke="#666" strokeDasharray="2 1" /></svg></div>
      <div className="flex-1 min-w-0 pr-[11px]">
        <div className="h-[20px] mt-[1px] flex items-center justify-between text-[13px] text-[#d4d4d4] -mr-[7px]"><span>Control panel</span><Dock /></div>
        <div className="pl-[4px]">
          <div className="h-[22px] mt-[7px] flex items-center text-[13px] text-[#d4d4d4]">Layers</div>
          <div className="h-[24px] mt-[5px] ml-[1px] mr-[1px] bg-linear-to-b from-[#6a6a6a] to-[#565656] border border-[#6e6e6e] rounded-[2px] flex items-center justify-between pl-[4px] pr-[6px] text-[13px] text-[#c8c8c8]">Clipped<svg width="9" height="5"><path d="M0 0h9L4.500 5z" fill="#aaa" /></svg></div>
          <div className="h-[22px] mt-[5px] flex items-center text-[13px] text-[#d4d4d4]">Fields</div>
          <div className="h-[557px] mt-[4px] bg-[#121212] pt-[1px]">
            {fields.map(([n, t, s]) => <FieldRow key={t} n={n} t={t} sel={s} />)}
          </div>
          <div className="grid grid-cols-[112px_166px] gap-x-[6px] mt-[8px]">
            <div className="h-[30px] flex items-start"><Btn t="Filter" cls="w-[44px] h-[23px] ml-[1px]" /></div>
            <div className="h-[23px] flex items-center text-[13px] text-[#d4d4d4]">Columns</div>
            <div className="h-[106px] bg-[#121212]" />
            <div className="h-[106px] bg-[#121212]" />
            <div className="h-[36px] flex items-center text-[13px] text-[#d4d4d4]">Rows</div>
            <div className="h-[36px] flex items-center text-[13px] text-[#d4d4d4] whitespace-nowrap">Value<div className="w-[13px] h-[13px] bg-[#141414] ml-[7px] mr-[6px]" />use NULL values</div>
            <div className="h-[106px] bg-[#121212]" />
            <div className="h-[106px] bg-[#121212] pt-[1px]">
              <FieldRow n="chart" t="sum" />
              <FieldRow n="earth" t="Length" />
            </div>
          </div>
          <div className="flex items-center mt-[7px] h-[24px]">
            <div className="w-[14px] h-[14px] bg-[#141414] mr-[5px]" />
            <span className="text-[13px] text-[#d4d4d4]">Use only selected features</span>
            <Btn t="Clear" cls="w-[78px] h-[24px] ml-auto mr-[1px]" />
          </div>
          <Btn t="Calculate" cls="h-[24px] mt-[8px] mx-[1px]" />
        </div>
      </div>
    </div>
    <div className="h-[36px] pt-[6px] flex items-center justify-between pl-[7px] pr-[2px] text-[13px] text-[#cfcfcf] shrink-0">
      <span className="whitespace-pre">Calculate... 100% |  generate view...100% |  done.</span>
      <div className="self-end mb-[2px]"><svg width="11" height="11"><path d="M9 1v10M5 5v6M1 9v2M1 9h10M5 5h6" stroke="#777" strokeWidth="2" strokeDasharray="1.500 1" /></svg></div>
    </div>
  </div>
);

const Meter = ({ a, b, fill, cls }: { a: string; b: string; fill: string; cls: string }) => (
  <div className={`flex flex-col ${cls}`}>
    <div className="flex justify-between text-[11px] text-[#c9cbdc] h-[18px] items-end leading-none whitespace-nowrap"><span>{a}</span><span>{b}</span></div>
    <div className="h-[3px] mt-[3px] bg-[#7d7fa8]"><div className={`h-full bg-white ${fill}`} /></div>
  </div>
);

const TopBar = () => (
  <div className="h-[35px] flex items-center text-[#d8d8e2] relative shrink-0 pb-[8px]">
    <div className="w-[34px] flex justify-center"><Power size={17} strokeWidth={1.3} /></div>
    <span className="text-[13px] font-bold">QGIS Desktop</span>
    <span className="text-[13px] ml-[10px]">Group Stats</span>
    <div className="absolute left-[867px] top-[4px] text-[14.500px] leading-[18px]">Sunday 5 November, 20:37</div>
    <Meter a="RAM" b="60.7%" fill="w-[60%]" cls="ml-auto w-[60px] -mt-[1px]" />
    <Meter a="CPU" b="10.7%" fill="w-[11%]" cls="ml-[13px] w-[58px] -mt-[1px]" />
    <div className="ml-[13px] flex items-center text-[#d8d8e2] pr-[1px]">
      {[<div key="a" className="w-[17px] h-[17px] rounded-full border border-current flex items-center justify-center"><Pause size={9} strokeWidth={1.300} /></div>,
        <svg key="b" width="20" height="24" viewBox="0 0 20 22" fill="none" stroke="currentColor"><path d="M4 4h12v14H4zM10 1l2 3H8zM10 21l-2-3h4zM1 11l3-2v4zM19 11l-3 2V9zM10 14V8M8 10l2-2 2 2" /></svg>,
        <svg key="c" width="18" height="22" viewBox="0 0 18 22"><path d="M7 1h4l5 17H2z" fill="#e6e6ee" /><path d="M5 8h8M4 12h10" stroke="#30346f" strokeWidth="1.500" /><rect x="1" y="18" width="16" height="3" fill="#e6e6ee" /></svg>,
        <SquareTerminal key="d" size={20} strokeWidth={1} />,
        <Clipboard key="e" size={20} strokeWidth={1} />,
        <div key="f" className="w-[17px] h-[17px] rounded-full border border-current flex items-center justify-center"><Pause size={9} strokeWidth={1.300} /></div>,
        <Lightbulb key="g" size={24} fill="#e6e6ee" strokeWidth={1} />,
        <Volume1 key="h" size={20} strokeWidth={1} />,
        <Bluetooth key="i" size={20} strokeWidth={1} />,
        <Monitor key="j" size={22} strokeWidth={1} />,
        <span key="k" className="text-[15px]">us</span>,
        <MonitorSmartphone key="l" size={20} strokeWidth={1} />,
        <ChevronDown key="m" size={15} strokeWidth={1.300} />,
      ].map((el, i) => <div key={i} className="w-[29.700px] flex justify-center">{el}</div>)}
    </div>
  </div>
);

const TaskBox = ({ children, cls }: { children: ReactNode; cls: string }) => (
  <div className={`h-[34px] flex items-center justify-center shrink-0 ${cls}`}>{children}</div>
);

const Edge = ({ s }: { s: number }) => (
  <Svg s={s}><circle cx="12" cy="12" r="11" fill="#1a8ad4" /><path d="M12 1a11 11 0 0 1 11 11c0 3-3 5-6 4 2-3-1-7-6-7-5 0-9 3-10 7C1 7 5 1 12 1z" fill="#3bd0c8" /><path d="M6 14c1-3 4-4 7-3 2 1 2 3 1 5 1 2 5 2 7 1a11 11 0 0 1-11 6c-3-2-5-5-4-9z" fill="#0c5aa8" /></Svg>
);

const Cone = ({ s }: { s: number }) => (
  <Svg s={s}><path d="M10 1h4l6 19H4z" fill="#f0f0f0" /><path d="M8.500 6h7l1.500 5H7zM6 14h12l2 6H4z" fill="#f28b1a" /><rect x="2" y="20" width="20" height="3" fill="#f28b1a" /></Svg>
);

const QMark = ({ s, op = '' }: { s: number; op?: string }) => (
  <Svg s={s} cls={op}><circle cx="11" cy="11" r="8" fill="none" stroke="#6fae3f" strokeWidth="4" /><path d="M11 9l9 12" stroke="#c8a23a" strokeWidth="3.500" /><path d="M14 14l6 8" stroke="#7ab648" strokeWidth="3.500" /></Svg>
);

const Pdf = ({ s }: { s: number }) => (
  <Svg s={s}><rect x="3" y="1" width="18" height="22" rx="1" fill="#e02f2f" /><rect x="17" y="2" width="4" height="20" fill="#ddd" /><path d="M6 17c3-2 5-6 5-9 0 4 2 6 5 7-3-1-7 0-10 2z" fill="none" stroke="#fff" strokeWidth="1.200" /></Svg>
);

const Taskbar = () => (
  <div className="h-[44px] mt-[9px] mx-[8px] bg-black/50 rounded-[4px] flex items-center shrink-0">
    <div className="ml-[12px] w-[27px] h-[27px] rounded-full bg-[#8fa0a0] relative overflow-hidden shrink-0">
      <div className="absolute left-[3px] top-[6px] w-[9px] h-[6px] rounded-full bg-[#5c6a6a]" />
      <div className="absolute left-[6px] top-[15px] w-[8px] h-[5px] rounded-full bg-[#5c6a6a]" />
    </div>
    <div className="ml-[491px] w-[34px] flex justify-center shrink-0">
      <svg width="34" height="36" viewBox="0 0 34 36"><path d="M17 0c2 5 16 28 17 36-4-3-8-6-11-6 0-6-2-10-6-10s-6 4-6 10c-3 0-7 3-11 6C1 28 15 5 17 0z" fill="#1b8fd6" /></svg>
    </div>
    <div className="ml-[10px] flex items-center shrink-0">
      <TaskBox cls="w-[58px] bg-white/20 border border-white/30"><Edge s={16} /></TaskBox>
      <TaskBox cls="w-[58px] bg-white/20 border border-white/30"><Cone s={16} /></TaskBox>
      <div className="w-[57px] h-[34px] bg-[#7356a8] flex shrink-0">
        <div className="w-[32px] flex items-center justify-center"><QMark s={16} op="opacity-50" /></div>
        <div className="flex-1 bg-[#8a6fb4] border border-[#9a80c0] flex items-center justify-center"><QMark s={16} op="opacity-50" /></div>
      </div>
      <TaskBox cls="w-[58px] bg-white/20 border border-white/30"><Pdf s={16} /></TaskBox>
    </div>
    <div className="ml-[5px] flex items-center shrink-0">
      <div className="w-[47px] flex justify-center"><Svg s={29}><path d="M10 1h4l1 3 3-1 3 3-1 3 3 1v4l-3 1 1 3-3 3-3-1-1 3h-4l-1-3-3 1-3-3 1-3-3-1v-4l3-1-1-3 3-3 3 1z" fill="#eee" /><circle cx="12" cy="12" r="6" fill="#333" /><circle cx="12" cy="12" r="4" fill="#1d7be0" /></Svg></div>
      <div className="w-[47px] flex justify-center"><div className="w-[28px] h-[28px] bg-[#555] rounded-[3px] flex flex-col overflow-hidden"><div className="h-[5px] bg-[#999]" /><div className="flex-1 flex items-center justify-center"><svg width="8" height="14"><path d="M1 1l6 6-6 6" fill="none" stroke="#ddd" /></svg></div></div></div>
      <div className="w-[47px] flex justify-center"><Svg s={30}><path d="M2 3h9l2 2h9v4H2z" fill="#e9a820" /><rect x="2" y="7" width="20" height="15" fill="#ffd94f" /><rect x="8" y="12" width="8" height="10" fill="#1173c9" /><rect x="10.500" y="17" width="3" height="5" fill="#ffd94f" /></Svg></div>
      <div className="w-[47px] flex flex-col items-center relative"><Edge s={30} /><div className="absolute top-[31px] w-[13px] h-[3px] bg-[#999] rounded-[1px]" /></div>
      <div className="w-[47px] flex justify-center"><div className="w-[25px] h-[29px] rounded-[4px] bg-[#e44332] flex items-center justify-center"><svg width="18" height="18" viewBox="0 0 18 18" fill="none" stroke="#fff" strokeWidth="2"><path d="M2 4l6 3 8-4M2 9l6 3 8-4M2 14l6 3 8-4" /></svg></div></div>
      <div className="w-[48px] flex justify-center"><svg width="26" height="36" viewBox="0 0 26 36"><path d="M13 0l8 8 5 16-10 12-10-4L0 20 5 10z" fill="#7c5ce0" /><path d="M13 0l4 14-5 8-12-2 5-10z" fill="#b8a4f0" /></svg></div>
      <div className="w-[47px] flex justify-center"><div className="w-[28px] h-[34px] rounded-full bg-[#1db868] flex items-center justify-center"><svg width="18" height="14" viewBox="0 0 18 14" fill="none" stroke="#fff" strokeWidth="1.800"><path d="M2 3c5-2 9-1 14 1M3 7c4-1 8-1 12 1M4 11c3-1 7-1 10 1" /></svg></div></div>
      <div className="w-[48px] flex justify-center"><svg width="32" height="34" viewBox="0 0 32 34"><circle cx="19" cy="4" r="3.500" fill="#6a6ac8" /><circle cx="27" cy="7" r="3" fill="#8080d8" /><rect x="14" y="10" width="16" height="16" rx="3" fill="#7a7ad0" /><rect x="1" y="10" width="17" height="17" rx="2" fill="#4b4fb8" /><path d="M5 14h9M9.500 14v9" stroke="#fff" strokeWidth="2" /><path d="M10 33l20-14v10l-6 5z" fill="#a67cd0" /></svg></div>
      <div className="w-[47px] flex justify-center"><Cone s={36} /></div>
      <div className="w-[46px] h-[40px] flex flex-col items-center justify-center relative">
        <div className="w-[43px] h-[40px] bg-white/15 rounded-[2px] flex items-center justify-center"><QMark s={32} /></div>
        <div className="absolute bottom-[-2px] left-[21px] w-[13px] h-[13px] rounded-full bg-white border border-[#223] flex items-center justify-center"><svg width="9" height="9"><path d="M4.500 0v9M0 4.500h9" stroke="#224" strokeWidth="1.200" /></svg></div>
      </div>
      <div className="w-[47px] flex flex-col items-center relative"><Pdf s={32} /><div className="absolute top-[34px] w-[13px] h-[3px] bg-[#999] rounded-[1px]" /></div>
      <div className="w-[71px] flex justify-center"><svg width="28" height="34" viewBox="0 0 28 34"><path d="M2 5h24l-3 28H5z" fill="#a6a6a6" /><ellipse cx="14" cy="5" rx="12" ry="4" fill="#cfcfcf" /><circle cx="14" cy="19" r="5" fill="none" stroke="#2f8cc4" strokeWidth="2.500" strokeDasharray="6 2" /></svg></div>
    </div>
    <div className="ml-auto mr-[4px] w-[34px] h-[34px] rounded-full bg-[#f04d66] flex items-center justify-center text-white shrink-0"><User size={26} strokeWidth={1} /></div>
  </div>
);

const Wallpaper = () => (
  <svg width="1920" height="1200" className="absolute left-0 top-0">
    <defs>
      <linearGradient id="top" x1="0" x2="1" y1="0" y2="0"><stop offset="0" stopColor="#232a60" /><stop offset="1" stopColor="#31356f" /></linearGradient>
      <linearGradient id="left" x1="0" x2="0" y1="0" y2="1"><stop offset=".68" stopColor="#1f2a66" /><stop offset=".74" stopColor="#5a3a8a" /><stop offset=".82" stopColor="#7c4aa0" /><stop offset=".9" stopColor="#b53f55" /><stop offset="1" stopColor="#b83c38" /></linearGradient>
      <linearGradient id="mid" x1="0" x2="0" y1="0" y2="1"><stop offset=".7" stopColor="#2c3170" /><stop offset=".78" stopColor="#6a3f90" /><stop offset=".95" stopColor="#7b3058" /></linearGradient>
      <linearGradient id="right" x1="0" x2="0" y1="0" y2="1"><stop offset=".706" stopColor="#2f3470" /><stop offset=".707" stopColor="#8652a8" /><stop offset=".768" stopColor="#8652a8" /><stop offset=".769" stopColor="#4a75a5" /><stop offset="1" stopColor="#4a7fb0" /></linearGradient>
      <linearGradient id="bot" x1="0" x2="1" y1="0" y2="0"><stop offset="0" stopColor="#b83c38" /><stop offset=".3" stopColor="#8a2c38" /><stop offset=".6" stopColor="#7b3058" /><stop offset=".8" stopColor="#7d3560" /></linearGradient>
      <linearGradient id="blue" x1="0" x2="1" y1="0" y2="0"><stop offset="0" stopColor="#4a4488" /><stop offset="1" stopColor="#4a80b2" /></linearGradient>
    </defs>
    <rect width="1920" height="1200" fill="url(#top)" />
    <rect x="0" y="0" width="9" height="1200" fill="url(#left)" />
    <rect x="1076" y="0" width="11" height="1200" fill="url(#mid)" />
    <rect x="1910" y="0" width="10" height="1200" fill="url(#right)" />
    <rect x="0" y="1139" width="1920" height="61" fill="url(#bot)" />
    <polygon points="1320,1135 1920,1135 1920,1200 1664,1200" fill="url(#blue)" />
  </svg>
);

export default function App() {
  return (
    <div className="w-[1920px] h-[1200px] relative overflow-hidden font-['Noto_Sans',sans-serif]">
      <Wallpaper />
      <div className="relative h-full flex flex-col">
        <TopBar />
        <div className="flex gap-[11px] pl-[9px] shrink-0">
          <Qgis />
          <GroupStats />
        </div>
        <Taskbar />
      </div>
    </div>
  );
}
